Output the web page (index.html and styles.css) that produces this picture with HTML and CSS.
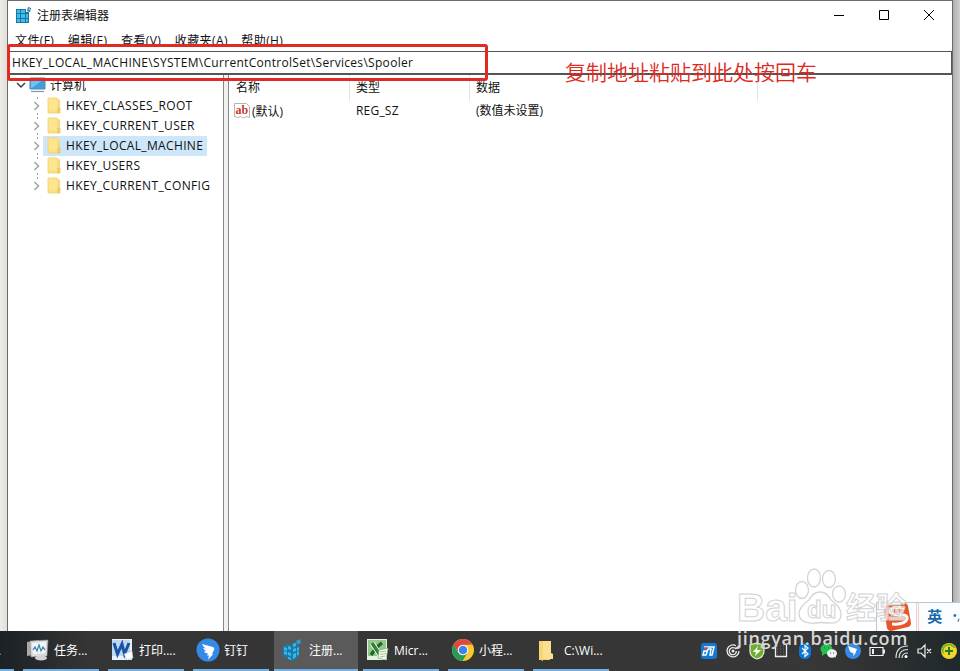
FILE: index.html
```html
<!DOCTYPE html>
<html lang="zh-CN">
<head>
    <meta charset="UTF-8">
    <meta name="viewport" content="width=device-width, initial-scale=1.0">
    <title>注册表编辑器</title>
    <link rel="stylesheet" href="styles.css">
</head>
<body>

<svg class="symbols" width="0" height="0">
    <symbol id="folder" viewBox="0 0 14 18">
        <path d="M1 1h9l3 2v13H1z" fill="#fbe083"/>
        <path d="M1 1h9v12H1z" fill="#fde58f"/>
        <path d="M11 11h2v5h-2z" fill="#f8d465" stroke="#d9b74b" stroke-width=".6"/>
        <path d="M1 1h9l2 2v13H1z" fill="none" stroke="#ecd072" stroke-width=".8"/>
    </symbol>
    <symbol id="chevron" viewBox="0 0 8 10">
        <path d="M2 1l4 4-4 4" fill="none" stroke="#a3a3a3" stroke-width="1.5"/>
    </symbol>
</svg>

<div class="desktop">
    <div class="window">
        <div class="titlebar">
            <svg class="app-icon" width="18" height="18" viewBox="0 0 18 18">
                <path d="M1 3h10v3h3v11H1z" fill="#18769f"/>
                <path d="M2 4h3v3H2zM6 4h4v3H6zM2 8h3v4H2zM6 8h4v4H6zM11 8h2v4h-2zM2 13h3v3H2zM6 13h4v3H6zM11 13h2v3h-2z" fill="#3fbfee"/>
                <path d="M13 1l3 1-1 4-3-1z" fill="#2d7595"/>
                <path d="M13.500 2.500h1.500v1.500h-1.500z" fill="#9ee2f7"/>
            </svg>
            <span class="title">注册表编辑器</span>
            <div class="controls">
                <svg width="12" height="12" viewBox="0 0 12 12"><path d="M1 6.500h10" stroke="#000" fill="none"/></svg>
                <svg width="12" height="12" viewBox="0 0 12 12"><path d="M1.500 1.500h9v9h-9z" stroke="#000" fill="none"/></svg>
                <svg width="12" height="12" viewBox="0 0 12 12"><path d="M1 1l10 10M11 1L1 11" stroke="#000" fill="none"/></svg>
            </div>
        </div>
        <div class="menubar">
            <span>文件(F)</span>
            <span>编辑(E)</span>
            <span>查看(V)</span>
            <span>收藏夹(A)</span>
            <span>帮助(H)</span>
        </div>
        <div class="address"><span class="path">HKEY_LOCAL_MACHINE\SYSTEM\CurrentControlSet\Services\Spooler</span></div>
        <div class="panes">
            <div class="tree">
                <div class="root">
                    <svg width="10" height="8" viewBox="0 0 10 8"><path d="M1 2l4 4 4-4" fill="none" stroke="#404040" stroke-width="1.500"/></svg>
                    <svg width="18" height="16" viewBox="0 0 18 16">
                        <path d="M1 1h15v11H1z" fill="#3a9fe3" stroke="#5d87a8"/>
                        <path d="M2 2h13L3 11H2z" fill="#6cc4f5"/>
                        <path d="M2 14.500h13" stroke="#8296a6" stroke-width="1.200"/>
                    </svg>
                    <span>计算机</span>
                </div>
                <div class="node"><svg class="arrow"><use href="#chevron"/></svg><div class="label"><svg class="folder"><use href="#folder"/></svg><span class="key">HKEY_CLASSES_ROOT</span></div></div>
                <div class="node"><svg class="arrow"><use href="#chevron"/></svg><div class="label"><svg class="folder"><use href="#folder"/></svg><span class="key">HKEY_CURRENT_USER</span></div></div>
                <div class="node"><svg class="arrow"><use href="#chevron"/></svg><div class="label selected"><svg class="folder"><use href="#folder"/></svg><span class="key">HKEY_LOCAL_MACHINE</span></div></div>
                <div class="node"><svg class="arrow"><use href="#chevron"/></svg><div class="label"><svg class="folder"><use href="#folder"/></svg><span class="key">HKEY_USERS</span></div></div>
                <div class="node last"><svg class="arrow"><use href="#chevron"/></svg><div class="label"><svg class="folder"><use href="#folder"/></svg><span class="key">HKEY_CURRENT_CONFIG</span></div></div>
            </div>
            <div class="splitter"></div>
            <div class="values">
                <div class="row head">
                    <span>名称</span>
                    <span>类型</span>
                    <span>数据</span>
                </div>
                <div class="row">
                    <span class="name">
                        <svg width="17" height="17" viewBox="0 0 17 17">
                            <path d="M.5.500h12l3 3v11l-3-1-3 1.500-3-1.500-2.500 1-3.500-1z" fill="#fff" stroke="#b5b5b5"/>
                            <text x="1.500" y="11" class="ab">ab</text>
                        </svg>(默认)</span>
                    <span class="type">REG_SZ</span>
                    <span>(数值未设置)</span>
                </div>
            </div>
        </div>
    </div>
</div>

<div class="mark-box"></div>
<div class="mark-text">复制地址粘贴到此处按回车</div>

<div class="ime">
    <svg width="30" height="29" viewBox="0 0 30 29">
        <path d="M3 3l19-3q2 0 3 3l3 17q0 3-3 4l-17 4q-3 0-4-3L1 7q0-3 2-4z" fill="#e9542b"/>
        <path d="M22 5Q7 3 7 8q0 4 12 4 6 0 5 4-2 6-15 5" fill="none" stroke="#fff" stroke-width="3"/>
    </svg>
    <i class="sep"></i>
    <span class="lang">英</span>
    <span class="dots">•,</span>
</div>

<div class="taskbar">
    <div class="task edge"><span>.</span></div>
    <div class="task">
        <svg width="26" height="24" viewBox="0 0 26 24">
            <path d="M2 4l12-2v14L2 18z" fill="#a9aaa9"/>
            <path d="M5 3l18-1-1 16-16 1z" fill="#dcdedd" stroke="#888" stroke-width=".6"/>
            <path d="M7 5l14-1-1 11-12 1z" fill="#f0f6f9"/>
            <path d="M8 12l2-3 2 4 2-6 2 6 2-4 2 3" fill="none" stroke="#3a86a6" stroke-width="1.200"/>
            <ellipse cx="16" cy="20" rx="6" ry="2.500" fill="#d3d3d3"/>
        </svg>
        <span>任务...</span>
    </div>
    <div class="task">
        <svg width="26" height="24" viewBox="0 0 26 24">
            <path d="M2 1h20v21H2z" fill="#e9f1fa"/>
            <path d="M2 2h18v16H2z" fill="#c0d8f3"/>
            <path d="M4 5l3.500 11L12 6l2.500 10L19 5" fill="none" stroke="#1953a1" stroke-width="3"/>
            <path d="M14 16l8-3 1 7-6 2z" fill="#fff" stroke="#9fbddd" stroke-width=".6"/>
        </svg>
        <span>打印....</span>
    </div>
    <div class="task">
        <svg width="26" height="24" viewBox="0 0 26 24">
            <circle cx="13" cy="12" r="11.500" fill="#348ae8"/>
            <path d="M7 6l11 3q2 1 1 3l-2 4 1 .5-5 5 1-4h-2l1-2q-3 0-4-2l2-.5Q9 12 8 10l3 .5Q8 9 7 6z" fill="#fff"/>
        </svg>
        <span>钉钉</span>
    </div>
    <div class="task active">
        <svg width="26" height="24" viewBox="0 0 26 24">
            <path d="M3 8l5-2 4 2v-3l4-1v5l3-2v11l-6 5-10-5z" fill="#147caf"/>
            <path d="M4 9l3 1v3l-3-1zM4 13l3 1v3l-3-1zM8 8l3 1v3l-3-1zM8 14l3 1v3l-3-1zM13 6l3-1v3l-3 1zM13 11l3-1v3l-3 1zM13 16l3-1v4l-3 2zM17 10l2-1v3l-2 1zM17 14l2-1v3l-2 2zM8 19l3 1v2l-3-1z" fill="#39b8e8"/>
            <path d="M16 3l4-2 1 4-4 2z" fill="#299dd1"/>
        </svg>
        <span>注册...</span>
    </div>
    <div class="task">
        <svg width="26" height="24" viewBox="0 0 26 24">
            <path d="M2 1h20v21H2z" fill="#e5f1df"/>
            <path d="M3 2h18v16H3z" fill="#93c68b"/>
            <path d="M17 5Q12 8 6 17" fill="none" stroke="#216a2c" stroke-width="3.500"/>
            <path d="M7 5l8 12" stroke="#fff" stroke-width="5"/>
            <path d="M7 5l8 12" stroke="#2f8139" stroke-width="3.500"/>
            <path d="M14 12l9-2-2 12-8-2z" fill="#f7fbf5" stroke="#72a96b" stroke-width=".7"/>
            <path d="M15 14l6-1M15 16.500l6-1M15 19l5-1" stroke="#9bc293"/>
        </svg>
        <span>Micr...</span>
    </div>
    <div class="task">
        <svg width="26" height="24" viewBox="0 0 26 24">
            <circle cx="13" cy="12" r="11" fill="#fbc831"/>
            <path d="M3.500 6.500A11 11 0 0 1 22.500 6.500L13 7 8.300 14.500z" fill="#dd4b3e"/>
            <path d="M3.500 6.500A11 11 0 0 0 12.500 23L17.700 14.500 8.300 14.500z" fill="#259b58"/>
            <circle cx="13" cy="12" r="5.300" fill="#fff"/>
            <circle cx="13" cy="12" r="4.300" fill="#4483e5"/>
        </svg>
        <span>小程...</span>
    </div>
    <div class="task">
        <svg width="26" height="24" viewBox="0 0 26 24">
            <path d="M4 3h11v19H4z" fill="#f2cd69"/>
            <path d="M8 3h8v12l2 1v5H7z" fill="#fbe090"/>
            <path d="M4 3l4 2v18l-4-2z" fill="#f6d477"/>
        </svg>
        <span>C:\Wi...</span>
    </div>
    <div class="tray">
        <svg viewBox="0 0 18 18"><rect x="1" y="1" width="16" height="16" rx="3" fill="#1479d4"/><path d="M4 5h10l-2 8h-2l1-6H8l-2 6H3l1-4h3" fill="none" stroke="#fff" stroke-width="1.500"/><path d="M4 6h4" stroke="#ef4c4c" stroke-width="1.500"/></svg>
        <svg viewBox="0 0 18 18"><path d="M12 3.700A6 6 0 1 0 15 9M12.300 9A3.500 3.500 0 1 1 9 5.700q2 0 3 1l3-3" fill="none" stroke="#eee" stroke-width="1.300"/><circle cx="9" cy="9" r="1.500" fill="#eee"/></svg>
        <svg viewBox="0 0 18 18"><path d="M9 1l7 2v6q0 6-7 8-7-2-7-8V3z" fill="#71ad31" stroke="#e0efcf" stroke-width="1.300"/><path d="M10 4L5 10h3l-1 4 6-6H9z" fill="#fff"/></svg>
        <svg viewBox="0 0 18 18"><path d="M3.500 3v11.500h11V3" fill="none" stroke="#eee" stroke-width="1.300"/><path d="M5 4h9M5 7h9M5 10h9M5 13h9" stroke="#777" stroke-dasharray="1 2"/></svg>
        <svg viewBox="0 0 18 18"><rect x="3" y="1" width="12" height="16" rx="5.500" fill="#0878d7"/><path d="M6 6l6 6-3 2.500v-11L12 6l-6 6" fill="none" stroke="#fff" stroke-width="1.200"/></svg>
        <svg viewBox="0 0 18 18"><ellipse cx="6.500" cy="7" rx="6" ry="5" fill="#20c34b"/><path d="M2 10v4l4-3z" fill="#20c34b"/><ellipse cx="12" cy="11.500" rx="5" ry="4.200" fill="#f1f1f1"/><path d="M14 14l2 2-1-4z" fill="#f1f1f1"/><path d="M4 6h1M8 6h1M10 11h1M13 11h1" stroke="#35664c" stroke-width="1.200"/></svg>
        <svg viewBox="0 0 18 18"><circle cx="9" cy="9" r="8" fill="#378ae6"/><path d="M4 4l9 3-2 5-2 2 .5-3Q6 11 5.500 8z" fill="#fff"/></svg>
        <svg viewBox="0 0 18 18"><path d="M2 5.500h13v8H2z" fill="none" stroke="#f2f2f2" stroke-width="1.200"/><path d="M15 7.500h2v4h-2M4 7h2v5H4z" fill="#eee"/></svg>
        <svg viewBox="0 0 18 18"><path d="M4 16Q4 4 16 4M7 16Q7 7.500 16 7.500M10 16Q10 11 16 11" fill="none" stroke="#ddd" stroke-width="1.200"/><circle cx="14" cy="14.500" r="1.500" fill="#fff"/></svg>
        <svg viewBox="0 0 18 18"><path d="M2 7h3l4-4v12l-4-4H2zM11 7l4 4M15 7l-4 4" fill="none" stroke="#eee" stroke-width="1.200"/></svg>
        <svg viewBox="0 0 18 18"><circle cx="9" cy="9" r="8" fill="#f4d22f"/><path d="M2 5Q9-2 16 5L4 12Q0 9 2 5z" fill="#70b52d"/><circle cx="9" cy="9" r="5.500" fill="#f1d72c"/><path d="M9 5v8M5 9h8" stroke="#237a27" stroke-width="2"/></svg>
    </div>
</div>

<div class="watermark">
    <div class="brand">
        <span class="bai">Bai</span>
        <svg width="54" height="60" viewBox="0 0 54 60">
            <g fill="#fff" fill-opacity=".75" stroke="#d4d4d4" stroke-width="1.300">
                <ellipse cx="5" cy="23" rx="6.500" ry="8.500"/>
                <ellipse cx="17" cy="11" rx="6.500" ry="9"/>
                <ellipse cx="32" cy="12" rx="6.500" ry="8.500"/>
                <ellipse cx="42" cy="27" rx="6.500" ry="8"/>
                <path d="M23 25q7 0 11 8 10 7 10 14 0 10-12 9-8-1-15 0-14 1-15-9 0-7 10-14 4-8 11-8z"/>
            </g>
            <text x="10" y="51" class="du">du</text>
        </svg>
        <span class="jy">经验</span>
    </div>
    <div class="site">jingyan.baidu.com</div>
</div>

</body>
</html>
```
FILE: styles.css
```css
* {
    box-sizing: border-box;
}
body {
    margin: 0;
    height: 671px;
    overflow: hidden;
    display: flex;
    flex-direction: column;
    font-family: "Open Sans", "Noto Sans CJK SC", sans-serif;
    font-size: 12px;
    color: #111;
}
.symbols {
    position: absolute;
}
svg {
    flex: none;
    overflow: visible;
}
span {
    white-space: nowrap;
}
.desktop {
    height: 631px;
    padding: 0 8px 0 7px;
    background: linear-gradient(90deg, #eeece5 0, #dddcd8 8px, #aaa 952px, #cfcfcf 960px);
}
.window {
    width: 946px;
    height: 631px;
    display: flex;
    flex-direction: column;
    background: #fff;
    border: 1px solid #6b6b6b;
    border-bottom: 0;
}
.titlebar {
    height: 30px;
    display: flex;
    align-items: center;
    padding: 0 0 2px 7px;
}
.title {
    margin-left: 4px;
}
.controls {
    display: flex;
    gap: 33px;
    margin-left: auto;
    padding-right: 17px;
}
.menubar {
    height: 20px;
    display: flex;
    padding-left: 7px;
    line-height: 20px;
    gap: 13.500px;
    letter-spacing: .4px;
}
.address {
    height: 24px;
    flex: none;
    border: 1px solid #555;
    border-width: 1px 1px 2px 0;
    padding-left: 4px;
    line-height: 21px;
}
.path {
    letter-spacing: .3px;
}
.panes {
    flex: 1;
    display: flex;
}
.tree {
    width: 215px;
}
.root {
    height: 21px;
    display: flex;
    align-items: center;
    padding: 0 0 2px 8px;
}
.root svg + svg {
    margin: 0 3px 0 3px;
}
.node {
    height: 20px;
    display: flex;
    align-items: center;
    padding-left: 24px;
    background: radial-gradient(circle, #999 .6px, transparent .8px) 28px 0 / 3px 4px repeat-y;
}
.last {
    background-repeat: no-repeat;
}
.arrow {
    width: 9px;
    height: 10px;
    background: #fff;
}
.label {
    height: 20px;
    display: flex;
    align-items: center;
    margin-left: 2px;
    padding: 0 4px;
}
.key {
    line-height: 16px;
    padding-bottom: 1px;
    letter-spacing: .35px;
}
.selected {
    background: #cde6f9;
}
.folder {
    width: 14px;
    height: 18px;
    margin-right: 5px;
}
.splitter {
    width: 6px;
    background: #f0f0f0;
    border: 1px solid #888;
    border-width: 0 1px;
}
.values {
    flex: 1;
}
.row {
    display: grid;
    grid-template-columns: 121px 120px 288px 1fr;
    height: 23px;
    line-height: 22px;
}
.row span {
    padding-left: 6px;
}
.row span:first-child {
    padding-left: 7px;
}
.head {
    line-height: 26px;
    height: 25px;
}
.head span {
    border-right: 1px solid #e5e5e5;
}
.row .name:first-child {
    display: flex;
    align-items: center;
    padding-left: 5px;
    gap: 1px;
}
.type {
    letter-spacing: .2px;
}
.ab {
    font: bold 12px "Liberation Serif", serif;
    fill: #c63b2c;
}
.mark-box {
    position: absolute;
    left: 7px;
    top: 44px;
    width: 481px;
    height: 37px;
    border: 3px solid #e02b24;
    border-radius: 3px;
}
.mark-text {
    position: absolute;
    left: 565px;
    top: 57px;
    font-size: 21px;
    line-height: 30px;
    font-weight: 350;
    color: #e0281e;
    white-space: nowrap;
}
.taskbar {
    height: 40px;
    display: flex;
    background: linear-gradient(90deg, #1b2125 0, #353535 90px, #373737 820px, #20282b 960px);
    color: #fff;
}
.task {
    width: 76px;
    flex: none;
    margin-right: 9px;
    display: flex;
    align-items: center;
    gap: 3px;
    padding-left: 2px;
    border-bottom: 2px solid #76aee0;
}
.edge {
    width: 14px;
    padding: 0;
}
.edge span {
    margin-left: -2px;
}
.active {
    width: 84px;
    margin-left: -4px;
    margin-right: 5px;
    padding-left: 6px;
    background: #5a5a5a;
}
.tray {
    display: flex;
    align-items: center;
    gap: 6px;
    margin-left: auto;
    padding-right: 2px;
}
.tray svg {
    width: 18px;
    height: 18px;
}
.ime {
    position: absolute;
    left: 876px;
    top: 602px;
    width: 84px;
    height: 29px;
    display: flex;
    align-items: center;
    padding-left: 6px;
    background: #fcfdfe;
    border: 1px solid #bbc7d2;
    border-width: 1px 0 0 1px;
    overflow: hidden;
}
.sep {
    width: 4px;
    height: 28px;
    margin-left: 3px;
    border: 1px solid #f3c9c4;
    border-width: 0 1px;
}
.lang {
    margin-left: 8px;
    padding-bottom: 3px;
    font-size: 15px;
    font-weight: bold;
    color: #1768a9;
}
.dots {
    margin-left: 10px;
    padding-bottom: 4px;
    color: #1768a9;
}
.watermark {
    position: absolute;
    left: 737px;
    top: 567px;
    width: 176px;
}
.brand {
    height: 60px;
    display: flex;
    align-items: flex-end;
}
.bai, .jy {
    font: bold 39px/38px "Liberation Sans", "Noto Sans CJK SC", sans-serif;
    color: rgba(255, 255, 255, .7);
    -webkit-text-stroke: 1px #d2d2d2;
}
.bai {
    width: 60px;
}
.jy {
    margin-left: -5px;
    font-size: 30px;
}
.du {
    font: bold 24px "Liberation Sans", sans-serif;
    fill: #fff;
    stroke: #d2d2d2;
}
.site {
    margin-top: 1px;
    font: 600 18px/20px "Open Sans", sans-serif;
    letter-spacing: .7px;
    color: #d6d6d6;
}
```
